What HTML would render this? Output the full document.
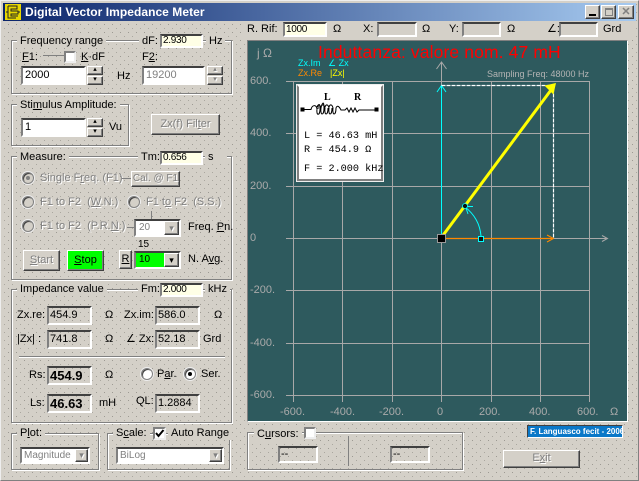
<!DOCTYPE html>
<html><head><meta charset="utf-8"><style>
html,body{margin:0;padding:0}
body{width:639px;height:481px;overflow:hidden;position:relative;font:11px "Liberation Sans",sans-serif;color:#000;background-color:#d4d0c8;
background-image:radial-gradient(circle at .5px .5px,#9d9a93 .6px,transparent .7px),radial-gradient(circle at 4.5px 4.5px,#aaa79f .6px,transparent .7px);background-size:8px 8px}
div,span.a{position:absolute;box-sizing:border-box}
.t{white-space:nowrap;line-height:14px;height:14px}
.g{border:1px solid #808080;box-shadow:1px 1px 0 #fff,inset 1px 1px 0 #fff}
.l{background:#d4d0c8;padding:0 3px;white-space:nowrap;line-height:14px;height:14px}
.s{border:2px solid;border-color:#404040 #fff #fff #808080;line-height:14px;padding-left:1px;white-space:nowrap;overflow:hidden}
.w{background:#fff}.y{background:#ffffe6;font-size:10px;line-height:10px;letter-spacing:-.3px}
.b{background:#d4d0c8;border:1px solid;border-color:#fff #404040 #404040 #fff;box-shadow:inset -1px -1px 0 #808080;text-align:center;white-space:nowrap}
.d{color:#808080;text-shadow:1px 1px 0 #fff}
u{text-decoration:underline}
.r{width:12px;height:12px;border-radius:50%;background:#fff;border:1px solid #808080;box-shadow:inset 1px 1px 0 #404040,0 0 0 1px #eee}
.rd{background:#d4d0c8}
.c{width:12px;height:12px;background:#fff;border:2px solid;border-color:#808080 #eee #eee #808080}
.sp{width:16px;height:9px;font-size:7px;line-height:6px}
.h{background:#808080;height:1px}
.v{background:#808080;width:1px}
.m{font-family:"Liberation Mono",monospace;font-size:10.2px;line-height:12px;white-space:pre}
</style></head><body>
<div style="left:0;top:0;width:639px;height:481px;border:1px solid #eee;border-right-color:#808080;border-bottom-color:#808080"></div>
<!-- title bar -->
<div style="left:3px;top:3px;width:633px;height:18px;background:linear-gradient(90deg,#0a246a,#a6caf0)"></div>
<svg style="position:absolute;left:5px;top:4px" width="16" height="16" viewBox="0 0 16 16"><rect width="16" height="16" fill="#e8d800"/><path d="M3 2h9v3H6v2h7v3H6v2h7M3 2v12h8M1 8h2M13 8h2" fill="none" stroke="#222" stroke-width="1"/></svg>
<div class="t" style="left:25px;top:5px;color:#fff;font-weight:bold;font-size:12px;letter-spacing:.05px">Digital Vector Impedance Meter</div>
<div class="b" style="left:585px;top:5px;width:15px;height:14px"><div style="left:3px;top:8px;width:7px;height:2px;background:#000"></div></div>
<div class="b" style="left:601px;top:5px;width:15px;height:14px"><div style="left:3px;top:2px;width:8px;height:8px;border:1px solid #808080;border-top-width:2px"></div></div>
<div class="b" style="left:618px;top:5px;width:16px;height:14px;color:#808080;font-size:11px;line-height:12px;font-weight:bold">✕</div>

<!-- Frequency -->
<div class="g" style="left:11px;top:40px;width:221px;height:54px"></div>
<div class="l" style="left:17px;top:34px">Frequency range</div>
<div class="l" style="left:139px;top:34px;width:24px">dF:</div>
<div class="s y" style="left:160px;top:34px;width:43px;height:14px">2.930</div>
<div class="l" style="left:206px;top:34px">Hz</div>
<div class="t" style="left:22px;top:50px"><u>F</u>1:</div>
<div class="h" style="left:43px;top:55px;width:21px"></div>
<div class="c" style="left:64px;top:51px"></div>
<div class="t" style="left:81px;top:50px"><u>K</u>·dF</div>
<div class="t" style="left:142px;top:50px">F<u>2</u>:</div>
<div class="s w" style="left:21px;top:66px;width:65px;height:19px;padding-left:2px;line-height:15px">2000</div>
<div class="b sp" style="left:87px;top:66px">▴</div><div class="b sp" style="left:87px;top:76px">▾</div>
<div class="t" style="left:117px;top:69px">Hz</div>
<div class="s w" style="left:142px;top:66px;width:63px;height:19px;padding-left:2px;line-height:15px;color:#808080">19200</div>
<div class="b sp d" style="left:207px;top:66px">▴</div><div class="b sp d" style="left:207px;top:76px">▾</div>

<!-- Stimulus -->
<div class="g" style="left:11px;top:104px;width:118px;height:42px"></div>
<div class="l" style="left:17px;top:98px">Sti<u>m</u>ulus Amplitude:</div>
<div class="s w" style="left:21px;top:118px;width:65px;height:19px;padding-left:2px;line-height:15px">1</div>
<div class="b sp" style="left:87px;top:118px">▴</div><div class="b sp" style="left:87px;top:128px">▾</div>
<div class="t" style="left:109px;top:120px">Vu</div>
<div class="b d" style="left:151px;top:114px;width:69px;height:21px;line-height:18px">Zx(f) Fil<u>t</u>er</div>

<!-- Measure -->
<div class="g" style="left:11px;top:156px;width:221px;height:124px"></div>
<div class="l" style="left:17px;top:150px">Measure:</div>
<div class="l" style="left:138px;top:150px;width:24px">Tm:</div>
<div class="s y" style="left:160px;top:151px;width:43px;height:14px">0.656</div>
<div class="l" style="left:205px;top:150px;width:22px">s</div>
<div class="r rd" style="left:22px;top:172px"><div style="left:3px;top:3px;width:4px;height:4px;border-radius:50%;background:#808080"></div></div>
<div class="t d" style="left:40px;top:171px">Single F<u>r</u>eq. (F1)</div>
<div class="h" style="left:122px;top:178px;width:9px"></div>
<div class="b d" style="left:131px;top:171px;width:49px;height:16px;line-height:14px;font-size:10px">Cal. @ F1</div>
<div class="r rd" style="left:22px;top:196px"></div>
<div class="t d" style="left:40px;top:195px">F1 to F2&nbsp; (<u>W</u>.N.)</div>
<div class="r rd" style="left:128px;top:196px"></div>
<div class="t d" style="left:146px;top:195px">F1 t<u>o</u> F2&nbsp; (S.S.)</div>
<div class="v" style="left:151px;top:211px;height:8px"></div>
<div class="r rd" style="left:22px;top:220px"></div>
<div class="t d" style="left:40px;top:219px">F1 to F2&nbsp; (P.R.<u>N</u>.)</div>
<div class="h" style="left:127px;top:227px;width:7px"></div>
<div class="s w d" style="left:134px;top:219px;width:47px;height:18px;font-size:10px;padding-left:3px;text-shadow:none">20</div>
<div class="b sp d" style="left:164px;top:221px;height:14px;line-height:12px;width:15px;font-size:9px">▾</div>
<div class="t" style="left:188px;top:220px">Freq. <u>P</u>n.</div>
<div class="t" style="left:138px;top:238px;font-size:10px">15</div>
<div class="b" style="left:119px;top:250px;width:13px;height:19px;line-height:17px"><u>R</u></div>
<div class="s" style="left:134px;top:251px;width:47px;height:18px;background:#0f0;font-size:10px;padding-left:3px">10</div>
<div class="b" style="left:164px;top:253px;height:14px;line-height:12px;width:15px;font-size:9px">▾</div>
<div class="t" style="left:188px;top:252px">N. A<u>v</u>g.</div>
<div class="b d" style="left:23px;top:250px;width:37px;height:21px;line-height:18px"><u>S</u>tart</div>
<div class="b" style="left:67px;top:250px;width:37px;height:21px;line-height:19px;background:#0f0"><u>S</u>top</div>

<!-- Impedance -->
<div class="g" style="left:11px;top:289px;width:221px;height:134px"></div>
<div class="l" style="left:17px;top:282px">Impedance value</div>
<div class="l" style="left:138px;top:282px;width:24px">Fm:</div>
<div class="s y" style="left:160px;top:283px;width:43px;height:14px">2.000</div>
<div class="l" style="left:205px;top:282px">kHz</div>
<div class="t" style="left:17px;top:308px">Zx.re:</div>
<div class="s" style="left:47px;top:306px;width:45px;height:19px;line-height:15px">454.9</div>
<div class="t" style="left:105px;top:308px">Ω</div>
<div class="t" style="left:124px;top:308px">Zx.im:</div>
<div class="s" style="left:155px;top:306px;width:45px;height:19px;line-height:15px">586.0</div>
<div class="t" style="left:214px;top:308px">Ω</div>
<div class="t" style="left:17px;top:332px">|Zx| :</div>
<div class="s" style="left:47px;top:330px;width:45px;height:19px;line-height:15px">741.8</div>
<div class="t" style="left:105px;top:332px">Ω</div>
<div class="t" style="left:126px;top:332px">∠ Zx:</div>
<div class="s" style="left:155px;top:330px;width:45px;height:19px;line-height:15px">52.18</div>
<div class="t" style="left:203px;top:332px">Grd</div>
<div class="h" style="left:19px;top:356px;width:206px"></div>
<div style="left:19px;top:357px;width:206px;height:1px;background:#fff"></div>
<div class="t" style="left:29px;top:368px">Rs:</div>
<div class="s" style="left:47px;top:366px;width:45px;height:19px;line-height:15px;font-weight:bold;font-size:13px">454.9</div>
<div class="t" style="left:105px;top:368px">Ω</div>
<div class="r" style="left:141px;top:368px"></div>
<div class="t" style="left:157px;top:367px">P<u>a</u>r.</div>
<div class="r" style="left:184px;top:368px"><div style="left:3px;top:3px;width:4px;height:4px;border-radius:50%;background:#000"></div></div>
<div class="t" style="left:201px;top:367px">Ser.</div>
<div class="t" style="left:30px;top:396px">Ls:</div>
<div class="s" style="left:47px;top:394px;width:45px;height:19px;line-height:15px;font-weight:bold;font-size:13px">46.63</div>
<div class="t" style="left:99px;top:396px">mH</div>
<div class="t" style="left:136px;top:394px">QL:</div>
<div class="s" style="left:155px;top:394px;width:45px;height:19px;line-height:15px">1.2884</div>

<!-- Plot / Scale -->
<div class="g" style="left:11px;top:433px;width:88px;height:37px"></div>
<div class="l" style="left:17px;top:426px">P<u>l</u>ot:</div>
<div class="s w d" style="left:20px;top:447px;width:70px;height:17px;font-size:10px;line-height:13px;padding-left:2px;text-shadow:none">Magnitude</div>
<div class="b sp d" style="left:75px;top:449px;height:13px;line-height:11px;width:13px;font-size:9px">▾</div>
<div class="g" style="left:107px;top:433px;width:123px;height:37px"></div>
<div class="l" style="left:113px;top:426px">S<u>c</u>ale:</div>
<div class="c" style="left:153px;top:427px;width:13px;height:13px"></div>
<svg style="position:absolute;left:153px;top:427px" width="13" height="13"><path d="M3 6l2.500 3 5-6" fill="none" stroke="#000" stroke-width="2"/></svg>
<div class="l" style="left:168px;top:426px">Auto Range</div>
<div class="s w d" style="left:116px;top:447px;width:108px;height:17px;font-size:10px;line-height:13px;padding-left:2px;text-shadow:none">BiLog</div>
<div class="b sp d" style="left:209px;top:449px;height:13px;line-height:11px;width:13px;font-size:9px">▾</div>

<!-- top strip -->
<div style="left:243px;top:21px;width:393px;height:16px;background:#d4d0c8"></div>
<div class="t" style="left:247px;top:22px">R. Rif:</div>
<div class="s y" style="left:283px;top:22px;width:44px;height:15px;line-height:11px">1000</div>
<div class="t" style="left:333px;top:22px">Ω</div>
<div class="t" style="left:363px;top:22px">X:</div>
<div class="s" style="left:377px;top:22px;width:40px;height:15px"></div>
<div class="t" style="left:422px;top:22px">Ω</div>
<div class="t" style="left:449px;top:22px">Y:</div>
<div class="s" style="left:462px;top:22px;width:39px;height:15px"></div>
<div class="t" style="left:507px;top:22px">Ω</div>
<div class="t" style="left:547px;top:22px">∠:</div>
<div class="s" style="left:559px;top:22px;width:39px;height:15px"></div>
<div class="t" style="left:603px;top:22px">Grd</div>

<!-- plot -->
<div style="left:247px;top:40px;width:381px;height:382px;background:#2e5a5e;border:1px solid;border-color:#808080 #fff #fff #808080"></div>
<svg style="position:absolute;left:0;top:0" width="639" height="481" shape-rendering="crispEdges">
<g fill="none" stroke="#a8a8a8" stroke-width="1">
<path d="M286 81.500H589M286 133.500H589M286 186.500H589M286 238.500H589M286 290.500H589M286 343.500H589M286 395.500H589"/>
<path d="M293.500 81V402M342.500 81V402M392.500 81V402M441.500 62V402M491.500 81V402M540.500 81V402M589.500 81V402"/>
<path d="M441.500 238.500H607"/>
</g>
<g shape-rendering="auto" fill="none">
<path d="M436.500 69L441.500 62L446.500 69M602 235.500L607.500 238.500L602 241.500" stroke="#a8a8a8"/>
<path d="M441.500 238V85" stroke="#0ff" stroke-width="1"/>
<path d="M437 92L441.500 85.500L446 92" stroke="#0ff"/>
<path d="M441.500 85.500H553.500V238" stroke="#fff" stroke-width="1.200" stroke-dasharray="4 1"/>
<path d="M441.500 238.500H553" stroke="#f80" stroke-width="1.300"/>
<path d="M547 235L553.500 238.500L547 242" stroke="#f80"/>
<path d="M441 238L551 90" stroke="#ff0" stroke-width="3"/>
<path d="M555 84L546 86L553 93Z" fill="#ff0" stroke="#ff0" stroke-width="1.500"/>
<path d="M481 236C480 224 474 214 465 207" stroke="#0ff"/>
<path d="M473 206.500H465.500L468 214" stroke="#0ff"/>
<circle cx="465" cy="206" r="2.500" fill="#111" stroke="#0ff" stroke-width=".8"/>
</g>
<rect x="437.500" y="234.500" width="8" height="8" fill="#000" stroke="#999"/>
<rect x="478.500" y="236.500" width="5" height="5" fill="#111" stroke="#0ff"/>
</svg>
<div class="t" style="left:318px;top:43px;color:#f00;font-size:17.500px;line-height:18px;height:18px;letter-spacing:.12px">Induttanza: valore nom. 47 mH</div>
<div class="t" style="left:257px;top:46px;color:#aaa;font-size:12px">j Ω</div>
<div class="t" style="left:298px;top:56px;color:#0ff;font-size:9px">Zx.Im &nbsp; ∠ Zx</div>
<div class="t" style="left:298px;top:66px;color:#f80;font-size:9px">Zx.Re</div>
<div class="t" style="left:330px;top:66px;color:#ff0;font-size:9px">|Zx|</div>
<div class="t" style="left:487px;top:67px;color:#b4b4b4;font-size:9px">Sampling Freq: 48000 Hz</div>
<div class="t" style="left:250px;top:74px;color:#aaa">600.</div>
<div class="t" style="left:250px;top:126px;color:#aaa">400.</div>
<div class="t" style="left:250px;top:179px;color:#aaa">200.</div>
<div class="t" style="left:250px;top:231px;color:#aaa">0</div>
<div class="t" style="left:250px;top:283px;color:#aaa">-200.</div>
<div class="t" style="left:250px;top:336px;color:#aaa">-400.</div>
<div class="t" style="left:250px;top:388px;color:#aaa">-600.</div>
<div class="t" style="left:280px;top:405px;color:#aaa">-600.</div>
<div class="t" style="left:330px;top:405px;color:#aaa">-400.</div>
<div class="t" style="left:379px;top:405px;color:#aaa">-200.</div>
<div class="t" style="left:437px;top:405px;color:#aaa">0</div>
<div class="t" style="left:479px;top:405px;color:#aaa">200.</div>
<div class="t" style="left:529px;top:405px;color:#aaa">400.</div>
<div class="t" style="left:577px;top:405px;color:#aaa">600.</div>
<div class="t" style="left:610px;top:405px;color:#aaa">Ω</div>

<!-- legend -->
<div style="left:297px;top:85px;width:86px;height:96px;background:#fff;border:2px solid;border-color:#fff #808080 #808080 #808080;box-shadow:0 0 0 1px #eee"></div>
<svg style="position:absolute;left:297px;top:85px" width="86" height="60" fill="none" stroke="#000"><path d="M5 24.500H14C15 20 19 19 20 24M20 24c-1 7 3 7 3 0s-2-5-2 0M20 22c1-3 3-3 4 1c-1 8 3 8 3 0s-2-5-3 0M24 22c1-3 3-3 4 1c-1 8 3 8 3 0M28 22c1-3 3-3 4 1c-1 8 3 8 3 0M32 22c1-3 3-3 4 1c-1 8 3 8 3 0c1-3 3-2 5 2H48l2-2 2 4 2-4 2 4 2-4 2 4 2-2H79"/><rect x="4" y="23" width="3" height="3" fill="#000"/><rect x="78" y="23" width="3" height="3" fill="#000"/></svg>
<div class="t" style="left:324px;top:91px;font:bold 10px 'Liberation Serif',serif;line-height:14px">L</div>
<div class="t" style="left:354px;top:91px;font:bold 10px 'Liberation Serif',serif;line-height:14px">R</div>
<div class="m" style="position:absolute;left:304px;top:131px">L = 46.63 mH</div>
<div class="m" style="position:absolute;left:304px;top:145px">R = 454.9 Ω</div>
<div class="m" style="position:absolute;left:304px;top:164px">F = 2.000 kHz</div>

<!-- cursors -->
<div class="g" style="left:247px;top:432px;width:216px;height:38px"></div>
<div class="l" style="left:254px;top:427px">C<u>u</u>rsors:</div>
<div class="c" style="left:304px;top:427px"></div>
<div class="s" style="left:278px;top:446px;width:40px;height:17px;line-height:13px">--</div>
<div class="s" style="left:390px;top:446px;width:40px;height:17px;line-height:13px">--</div>
<div class="v" style="left:348px;top:436px;height:30px"></div>
<div style="left:527px;top:425px;width:96px;height:13px;background:#0a78c8;border:1px solid;border-color:#404040 #fff #fff #404040;color:#fff;font:bold 8px/11px 'Liberation Sans',sans-serif;white-space:nowrap;overflow:hidden;padding-left:2px">F. Languasco fecit - 2006</div>
<div class="b d" style="left:503px;top:450px;width:77px;height:18px;line-height:15px">E<u>x</u>it</div>
</body></html>
